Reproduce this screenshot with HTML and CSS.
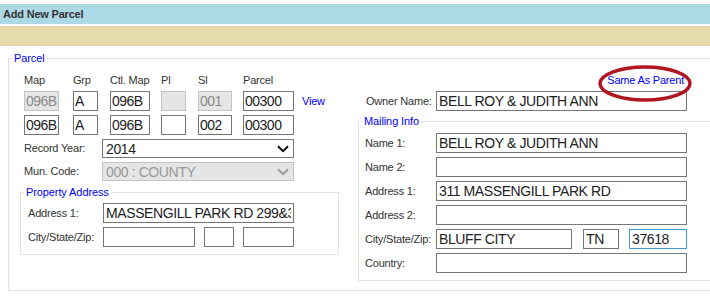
FILE: index.html
```html
<!DOCTYPE html>
<html>
<head>
<meta charset="utf-8">
<link rel="stylesheet" href="styles.css">
</head>
<body>
<div class="page">
  <div class="titlebar">Add New Parcel</div>
  <div class="toolbar"></div>
  <fieldset class="box outer">
    <legend>Parcel</legend>
    <div class="cols">
      <div class="left">
        <div class="ids">
          <div class="idcol w35 g14"><span class="lbl">Map</span><input class="fld" disabled value="096B"><input class="fld" value="096B"></div>
          <div class="idcol w25 g12"><span class="lbl">Grp</span><input class="fld" value="A"><input class="fld" value="A"></div>
          <div class="idcol w40 g11"><span class="lbl">Ctl. Map</span><input class="fld" value="096B"><input class="fld" value="096B"></div>
          <div class="idcol w25 g12"><span class="lbl">Pl</span><input class="fld" disabled value=""><input class="fld" value=""></div>
          <div class="idcol w34 g11"><span class="lbl">Sl</span><input class="fld" disabled value="001"><input class="fld" value="002"></div>
          <div class="idcol w51 g8"><span class="lbl">Parcel</span><input class="fld" value="00300"><input class="fld" value="00300"></div>
          <div class="viewcol"><a class="link">View</a></div>
        </div>
        <div class="frow first">
          <span class="lbl lw78">Record Year:</span>
          <div class="sel">
            <span>2014</span>
            <svg class="chev" width="12" height="8" viewBox="0 0 12 8"><path d="M1 1.2 L6 6.2 L11 1.2" fill="none" stroke="#111" stroke-width="2"/></svg>
          </div>
        </div>
        <div class="frow">
          <span class="lbl lw78">Mun. Code:</span>
          <div class="sel off">
            <span>000 : COUNTY</span>
            <svg class="chev" width="12" height="8" viewBox="0 0 12 8"><path d="M1 1.2 L6 6.2 L11 1.2" fill="none" stroke="#999" stroke-width="2"/></svg>
          </div>
        </div>
        <fieldset class="box prop">
          <legend>Property Address</legend>
          <div class="inner">
            <div class="frow0">
              <span class="lbl lw75">Address 1:</span>
              <input class="fld w191" value="MASSENGILL PARK RD 299&amp;301">
            </div>
            <div class="frow">
              <span class="lbl lw75">City/State/Zip:</span>
              <input class="fld w92" value="">
              <input class="fld w30 ml9" value="">
              <input class="fld w51 ml9" value="">
            </div>
          </div>
        </fieldset>
      </div>
      <div class="right">
        <div class="same">
          <a class="link">Same As Parent</a>
          <svg class="ring" width="94" height="37" viewBox="0 0 94 37"><ellipse cx="47" cy="18.5" rx="45" ry="16.5" fill="none" stroke="#b0161f" stroke-width="3.5"/></svg>
        </div>
        <div class="frow owner">
          <span class="lbl lw70">Owner Name:</span>
          <input class="fld w251" value="BELL ROY &amp; JUDITH ANN">
        </div>
        <fieldset class="box mail">
          <legend>Mailing Info</legend>
          <div class="inner">
            <div class="frow0"><span class="lbl lw71">Name 1:</span><input class="fld w251" value="BELL ROY &amp; JUDITH ANN"></div>
            <div class="frow"><span class="lbl lw71">Name 2:</span><input class="fld w251" value=""></div>
            <div class="frow"><span class="lbl lw71">Address 1:</span><input class="fld w251" value="311 MASSENGILL PARK RD"></div>
            <div class="frow"><span class="lbl lw71">Address 2:</span><input class="fld w251" value=""></div>
            <div class="frow"><span class="lbl lw71">City/State/Zip:</span><input class="fld w136" value="BLUFF CITY"><input class="fld w36 ml11" value="TN"><input class="fld w58 ml10 focus" value="37618"></div>
            <div class="frow"><span class="lbl lw71">Country:</span><input class="fld w251" value=""></div>
          </div>
        </fieldset>
      </div>
    </div>
  </fieldset>
</div>
</body>
</html>
```

FILE: styles.css
```css
html, body {
  margin: 0;
  padding: 0;
  overflow: hidden;
  background: #fff;
}
body {
  font-family: "Liberation Sans", Arial, sans-serif;
  color: #333;
}
.page {
  padding-top: 4px;
  width: 710px;
}
.titlebar {
  height: 20px;
  line-height: 20px;
  background: #add8e6;
  font-weight: bold;
  font-size: 11px;
  letter-spacing: -0.2px;
  padding-left: 3px;
  color: #333;
}
.toolbar {
  margin-top: 2px;
  height: 20px;
  background: #e6dbad;
}
.box {
  border: 1px solid #e2e2e2;
  margin: 0;
  padding: 0;
  min-width: 0;
}
.box > legend {
  font-size: 11px;
  line-height: 14px;
  color: #0000ff;
  padding: 0 2px;
  margin-left: 3px;
  letter-spacing: -0.1px;
}
.outer {
  margin: 5px 0 0 8px;
  width: 702px;
  box-sizing: border-box;
  border-right: none;
  padding: 9px 0 9px 0;
}
.cols {
  display: flex;
  align-items: flex-start;
  padding-left: 11px;
}
.left {
  width: 319px;
  flex: none;
}
.right {
  margin-left: 19px;
  flex: 1;
  min-width: 0;
  position: relative;
}
.lbl {
  font-size: 11px;
  line-height: 13px;
  letter-spacing: -0.2px;
  color: #333;
  white-space: nowrap;
  flex: none;
}
.ids {
  display: flex;
  padding-left: 4px;
}
.idcol {
  display: flex;
  flex-direction: column;
  flex: none;
}
.idcol .lbl {
  margin-bottom: 4px;
}
.idcol .fld {
  padding: 0 1px;
  letter-spacing: -0.5px;
}
.idcol .fld + .fld {
  margin-top: 4px;
}
.viewcol {
  padding-top: 17px;
}
.link {
  color: #0000ff;
  font-size: 11px;
  line-height: 20px;
  letter-spacing: -0.2px;
  cursor: pointer;
}
.fld {
  box-sizing: border-box;
  height: 20px;
  border: 1px solid #767676;
  border-radius: 0;
  padding: 0 2px;
  margin: 0;
  font-family: "Liberation Sans", Arial, sans-serif;
  font-size: 14px;
  letter-spacing: -0.4px;
  color: #222;
  background: #fff;
  outline: none;
  flex: none;
}
.fld:disabled {
  background: #e5e5e5;
  border-color: #c4c4c4;
  color: #8a8a8a;
  -webkit-text-fill-color: #8a8a8a;
}
.fld.focus {
  border-color: #3d9ad6;
}
.w25 { width: 25px; }
.w30 { width: 30px; }
.w34 { width: 34px; }
.w35 { width: 35px; }
.w36 { width: 36px; }
.w40 { width: 40px; }
.w51 { width: 51px; }
.w58 { width: 58px; }
.w92 { width: 92px; }
.w136 { width: 136px; }
.w191 { width: 191px; }
.w251 { width: 251px; }
.idcol.w25 .fld, .idcol.w35 .fld, .idcol.w40 .fld, .idcol.w34 .fld, .idcol.w51 .fld { width: 100%; }
.g8 { margin-right: 8px; }
.g11 { margin-right: 11px; }
.g12 { margin-right: 12px; }
.g14 { margin-right: 14px; }
.ml9 { margin-left: 9px; }
.ml10 { margin-left: 10px; }
.ml11 { margin-left: 11px; }
.lw70 { width: 70px; }
.lw71 { width: 71px; }
.lw75 { width: 75px; }
.lw78 { width: 78px; }
.frow, .frow0 {
  display: flex;
  align-items: center;
  margin-top: 4px;
}
.frow0 { margin-top: 0; }
.left > .frow {
  padding-left: 4px;
}
.sel {
  box-sizing: border-box;
  width: 192px;
  height: 19px;
  border: 1px solid #767676;
  display: flex;
  align-items: center;
  justify-content: space-between;
  padding: 0 4px 0 3px;
  font-size: 14px;
  letter-spacing: -0.4px;
  color: #222;
  flex: none;
}
.sel.off {
  background: #e5e5e5;
  border-color: #c4c4c4;
  color: #999;
}
.chev {
  display: block;
}
.prop {
  margin-top: 4px;
  padding: 4px 0 7px 0;
}
.prop .inner {
  padding-left: 7px;
}
.same {
  position: relative;
  width: 328px;
  display: flex;
  justify-content: flex-end;
  padding-right: 2px;
  box-sizing: border-box;
}
.same .link {
  line-height: 13px;
  position: relative;
  z-index: 1;
}
.ring {
  position: absolute;
  left: 240px;
  top: -9px;
}
.owner {
  padding-left: 8px;
}
.mail {
  margin-top: 3px;
  padding: 5px 0 7px 0;
  border-right: none;
}
.mail .inner {
  padding-left: 6px;
}
```
